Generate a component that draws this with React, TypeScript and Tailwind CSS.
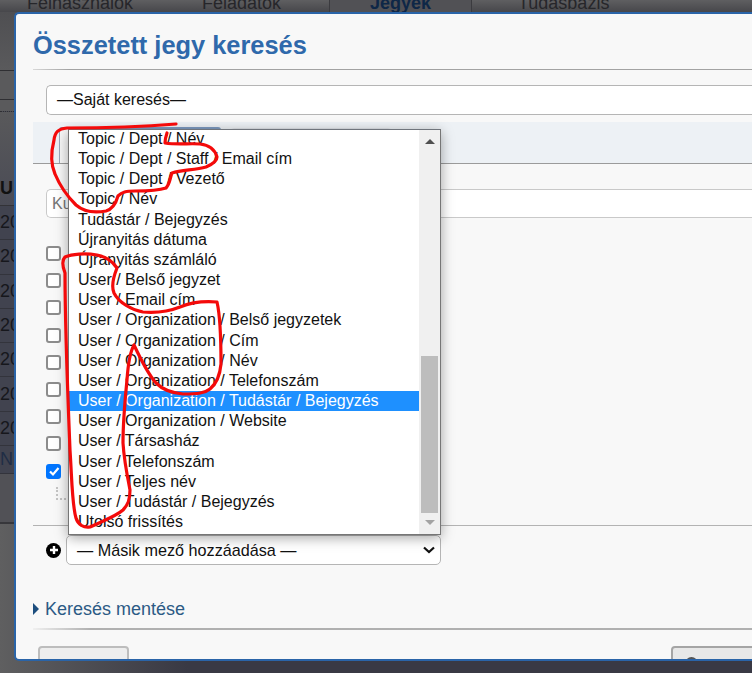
import React from "react";

const OPTIONS = [
  "Topic / Dept / Név",
  "Topic / Dept / Staff / Email cím",
  "Topic / Dept / Vezető",
  "Topic / Név",
  "Tudástár / Bejegyzés",
  "Újranyitás dátuma",
  "Újranyitás számláló",
  "User / Belső jegyzet",
  "User / Email cím",
  "User / Organization / Belső jegyzetek",
  "User / Organization / Cím",
  "User / Organization / Név",
  "User / Organization / Telefonszám",
  "User / Organization / Tudástár / Bejegyzés",
  "User / Organization / Website",
  "User / Társasház",
  "User / Telefonszám",
  "User / Teljes név",
  "User / Tudástár / Bejegyzés",
  "Utolsó frissítés",
];

const ROW_TEXT = ["20", "20", "20", "20", "20", "20", "20"];

function Backdrop() {
  return (
    <div className="flex h-full flex-col bg-[#5a5a5c]">
      <div className="flex h-[12px] items-end overflow-hidden bg-gradient-to-b from-[#5f5f61] to-[#47474b] text-[18px] leading-[18px] text-[#26262a]">
        <span className="ml-[27px] w-[175px] shrink-0">Felhasználók</span>
        <span className="w-[127px] shrink-0">Feladatok</span>
        <span className="flex h-full w-[143px] shrink-0 items-end justify-center border-x border-[#3b3b3f] bg-[#515155] font-bold text-[#0e2747]">
          Jegyek
        </span>
        <span className="ml-[46px]">Tudásbázis</span>
      </div>
      <div className="h-[59px] border-b border-[#2f2f33] bg-gradient-to-b from-[#4f4f52] to-[#5a5a5c]" />
      <div className="h-[29px] border-b border-[#2f2f33] bg-[#5a5a5c]" />
      <div className="mt-[11px] h-[94px] border-t border-dotted border-[#2f2f33] bg-gradient-to-b from-[#59595b] to-[#4a4b55] pt-[67px] text-[18px] font-bold leading-[18px] text-[#111]">
        U
      </div>
      <div className="border-t border-[#333338] bg-[#41434f]">
        {ROW_TEXT.map((text, i) => (
          <div
            key={i}
            className="flex h-[34.3px] items-center border-b border-[#33343c] text-[18px] text-[#16171c]"
          >
            {text}
          </div>
        ))}
        <div className="flex h-[28px] items-center border-b border-[#33343c] text-[18px] text-[#1f2d45]">Ni</div>
      </div>
      <div className="h-[50px] border-b-2 border-[#37373b] bg-[#515156]" />
      <div className="flex-1 bg-gradient-to-r from-[#5f5f60] to-[#393944] to-[25%]" />
    </div>
  );
}

function Checkbox({ checked }: { checked?: boolean }) {
  if (checked) {
    return (
      <span className="flex h-[15px] w-[15px] items-center justify-center rounded-[3px] bg-[#0075ff]">
        <svg viewBox="0 0 12 12" className="h-[12px] w-[12px]">
          <path d="M2 6.5 L5 9.5 L10.5 3" fill="none" stroke="#fff" strokeWidth="2.2" />
        </svg>
      </span>
    );
  }
  return <span className="block h-[15px] w-[15px] rounded-[3px] border-2 border-[#8c8c8c] bg-white" />;
}

function OptionList() {
  return (
    <div className="absolute left-[52px] top-[115px] flex h-[406px] w-[373px] overflow-hidden border border-[#767676] border-t-[#70757c] bg-white font-['Liberation_Sans',sans-serif] text-[16px] leading-[20.16px] text-[#111] shadow-[0_3px_12px_rgba(0,0,0,0.35)]">
      <div className="-mt-[1px] min-w-0 flex-1">
        {OPTIONS.map((option) => (
          <div
            key={option}
            className={`h-[20.16px] whitespace-nowrap pl-[9px] ${
              option === "User / Organization / Tudástár / Bejegyzés" ? "bg-[#1e90ff] text-white" : ""
            }`}
          >
            {option}
          </div>
        ))}
      </div>
      <div className="flex w-[21px] shrink-0 flex-col items-center bg-[#f0f0f0]">
        <svg viewBox="0 0 10 5" className="mt-[9px] h-[5px] w-[10px]">
          <path d="M5 0 L10 5 L0 5 Z" fill="#505050" />
        </svg>
        <div className="mt-[212px] h-[157px] w-[17px] bg-[#bdbdbd]" />
        <svg viewBox="0 0 10 5" className="mt-[7px] h-[5px] w-[10px]">
          <path d="M0 0 L10 0 L5 5 Z" fill="#a3a3a3" />
        </svg>
      </div>
    </div>
  );
}

function Scribbles() {
  return (
    <svg
      viewBox="0 0 752 673"
      className="pointer-events-none absolute left-0 top-0 h-[673px] w-[752px]"
      fill="none"
      stroke="#f40a0a"
      strokeWidth="3.2"
      strokeLinecap="round"
      strokeLinejoin="round"
    >
      <path d="M176 124 C140 127 100 128 67 128 C58 129 55 132 54 140 C51 152 51 165 55 174 C60 186 68 197 76 205 C84 212 95 213 106 211 C113 209 116 203 118 196 C122 192 126 191 135 191 C150 191 160 190 166 188 C170 184 170 178 172 173 C182 170 195 170 206 167 C213 164 217 160 217 157 C215 150 210 145 200 144 C190 143 178 145 165 143 C165 139 166 136 167 133" />
      <path d="M65 273 C62 265 62 260 65 257 C72 254 85 253 97 255 C107 257 113 262 117 268 C113 278 111 286 114 293 C119 303 132 310 143 312 C155 313 170 311 180 307 C192 302 205 301 217 302 C220 315 221 335 221 364 C220 375 216 384 210 389 C205 393 198 394 183 394 C172 393 162 389 156 383 C148 374 142 362 134 345 C130 352 128 365 127 380 C125 400 123 420 123 443 C124 460 127 475 130 490 C130 500 128 505 123 510 C115 517 100 522 90 527 C84 528 78 525 76 518 C72 505 72 480 70 450 C68 400 65 330 65 273" />
    </svg>
  );
}

function Modal() {
  return (
    <div className="absolute left-[14px] top-[12px] h-[649px] w-[800px] overflow-hidden rounded-l-[5px] rounded-tr-none border-2 border-r-0 border-[#2a64a8] bg-[#f8f8f8] font-['Liberation_Sans',sans-serif] text-[#111]">
      <div className="pl-[17px]">
        <h1 className="pt-[15px] text-[25.4px] font-bold leading-[32px] text-[#2f69ab]">Összetett jegy keresés</h1>
        <div className="mt-[8px] h-[1px] w-[719px] bg-gradient-to-r from-[#d8d8d8] via-[#a3a3a3] via-[5%] to-[#a3a3a3]" />
      </div>
      <div className="ml-[30px] mt-[15px] flex h-[30px] items-center rounded-l-[5px] border border-r-0 border-[#b5b5b5] bg-white pl-[10px] text-[16px]">
        —Saját keresés—
      </div>
      <div className="ml-[17px] mt-[7px] flex h-[42px] items-end border-b border-[#9b9b9b] bg-[#edf1f5]">
        <div className="ml-[26px] h-[36px] w-[162px] rounded-t-[3px] border-l border-t-2 border-[#9aa9bb] border-t-[#7d9ac0] bg-[#f8f8f8]" />
        <div className="ml-[9px] h-[35px] w-[162px] rounded-t-[4px] border border-[#dfe3e8] bg-[#f2f4f6]" />
      </div>
      <div className="ml-[30px] mt-[25px] flex h-[29px] items-center rounded-l-[5px] border border-r-0 border-[#c9c9c9] bg-white pl-[5px] text-[16px] text-[#757575]">
        Kulcsszavak
      </div>
      <div className="ml-[30px] mt-[28px] flex flex-col gap-[12.2px]">
        {Array.from({ length: 8 }).map((_, i) => (
          <Checkbox key={i} />
        ))}
        <Checkbox checked />
      </div>
      <div className="ml-[40px] mt-[8px] h-[13px] w-[10px] border-b-2 border-l-2 border-dotted border-[#c4c4c4]" />
      <div className="ml-[17px] mt-[25.6px] h-[1px] w-[719px] bg-[#b3b3b3]" />
      <div className="ml-[30px] mt-[9px] flex items-center gap-[5px]">
        <span className="flex h-[15px] w-[15px] items-center justify-center rounded-full bg-black">
          <svg viewBox="0 0 10 10" className="h-[10px] w-[10px]">
            <path d="M5 1 V9 M1 5 H9" stroke="#fff" strokeWidth="2.4" />
          </svg>
        </span>
        <div className="flex h-[30px] w-[375px] items-center justify-between rounded-[5px] border border-[#b5b5b5] bg-white pl-[10px] pr-[5px] text-[16.2px]">
          <span>— Másik mező hozzáadása —</span>
          <svg viewBox="0 0 12 8" className="h-[8px] w-[12px]">
            <path d="M1 1.5 L6 6 L11 1.5" fill="none" stroke="#111" strokeWidth="2.2" />
          </svg>
        </div>
      </div>
      <div className="ml-[17px] mt-[32px] flex items-center gap-[6px] text-[18px] leading-[24px] text-[#2c5a85]">
        <svg viewBox="0 0 6 12" className="h-[12px] w-[6px]">
          <path d="M0 0 L6 6 L0 12 Z" fill="#1d4e7e" />
        </svg>
        Keresés mentése
      </div>
      <div className="ml-[17px] mt-[7px] h-[2px] w-[719px] bg-gradient-to-r from-[#f0f0f0] via-[#b0b0b0] via-[8%] to-[#b0b0b0]" />
      <div className="ml-[22px] mt-[16px] flex justify-between">
        <div className="h-[30px] w-[91px] rounded-[4px] border-2 border-[#bdbdbd] bg-[#eeeeee] pl-[14px] pt-[9px] text-[16px] leading-[18px]">
          Mégse
        </div>
        <div className="mr-[23px] flex h-[30px] w-[120px] rounded-[4px] border-2 border-[#a5a5a5] bg-[#e8e8e8] pl-[12px] pt-[9px] text-[16px] leading-[18px]">
          <span className="mr-[8px] block h-[13px] w-[13px] rounded-full border-2 border-[#555]" />
          Keresés
        </div>
      </div>
      <OptionList />
    </div>
  );
}

export default function App() {
  return (
    <div className="relative h-[673px] w-[752px] overflow-hidden font-['Liberation_Sans',sans-serif]">
      <Backdrop />
      <Modal />
      <Scribbles />
    </div>
  );
}
